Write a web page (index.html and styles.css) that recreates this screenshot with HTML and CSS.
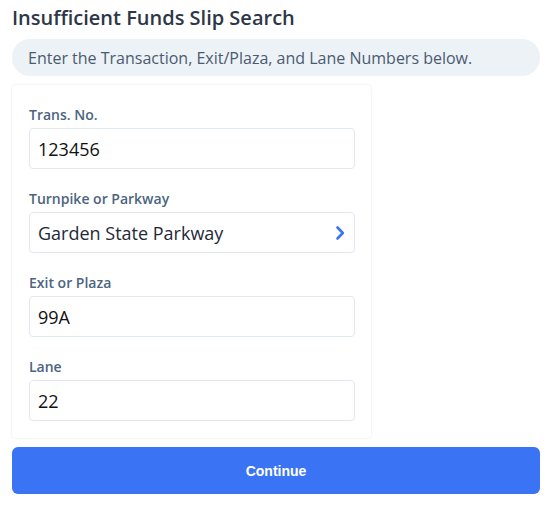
FILE: index.html
```html
<!DOCTYPE html>
<html>
<head>
<meta charset="utf-8">
<link rel="stylesheet" href="styles.css">
</head>
<body>
<div class="page">
  <h1 class="title">Insufficient Funds Slip Search</h1>
  <div class="banner">Enter the Transaction, Exit/Plaza, and Lane Numbers below.</div>
  <div class="card">
    <div class="field">
      <div class="label">Trans. No.</div>
      <div class="input">123456</div>
    </div>
    <div class="field">
      <div class="label">Turnpike or Parkway</div>
      <div class="input select"><span class="sel-text">Garden State Parkway</span>
        <svg class="chev" width="12" height="16" viewBox="0 0 12 16"><path d="M3.5 2.5 L8.8 8 L3.5 13.5" fill="none" stroke="#3b73f5" stroke-width="2.6" stroke-linecap="round" stroke-linejoin="round"/></svg>
      </div>
    </div>
    <div class="field">
      <div class="label">Exit or Plaza</div>
      <div class="input">99A</div>
    </div>
    <div class="field">
      <div class="label">Lane</div>
      <div class="input">22</div>
    </div>
  </div>
  <button class="btn">Continue</button>
</div>
</body>
</html>
```
FILE: styles.css
```css
html, body { margin: 0; padding: 0; background: #fff; }
body { font-family: "Open Sans", "Noto Sans", sans-serif; }
.page { padding: 4px 10px 0 12px; }
.title {
  margin: 0;
  font-size: 20px;
  font-weight: 600;
  color: #2d3748;
  line-height: 28px;
}
.banner {
  margin-top: 7px;
  height: 37px;
  box-sizing: border-box;
  background: #edf2f7;
  border-radius: 18px;
  padding-left: 16px;
  display: flex;
  align-items: center;
  font-size: 16px;
  color: #4a5b70;
}
.card {
  margin-top: 9px;
  width: 359px;
  box-sizing: border-box;
  background: #fff;
  border-radius: 4px;
  box-shadow: 0 0 3px rgba(0,0,0,0.10);
  padding: 21px 16px 17px 17px;
  display: flex;
  flex-direction: column;
  gap: 21px;
}
.field { display: flex; flex-direction: column; }
.label {
  font-size: 14px;
  font-weight: 600;
  color: #4c6480;
  line-height: 18px;
  margin-bottom: 4px;
}
.input {
  height: 41px;
  box-sizing: border-box;
  border: 1px solid #e2e8f0;
  border-radius: 4px;
  padding-left: 8px;
  display: flex;
  align-items: center;
  font-size: 18px;
  color: #111;
}
.select { justify-content: space-between; padding-right: 8px; color: #1f2937; }
.chev { display: block; }
.btn {
  margin-top: 9px;
  width: 528px;
  height: 47px;
  border: none;
  border-radius: 6px;
  background: #3b73f5;
  color: #fff;
  font-family: "Liberation Sans", Arial, sans-serif;
  font-weight: bold;
  font-size: 14px;
  display: block;
}
```
